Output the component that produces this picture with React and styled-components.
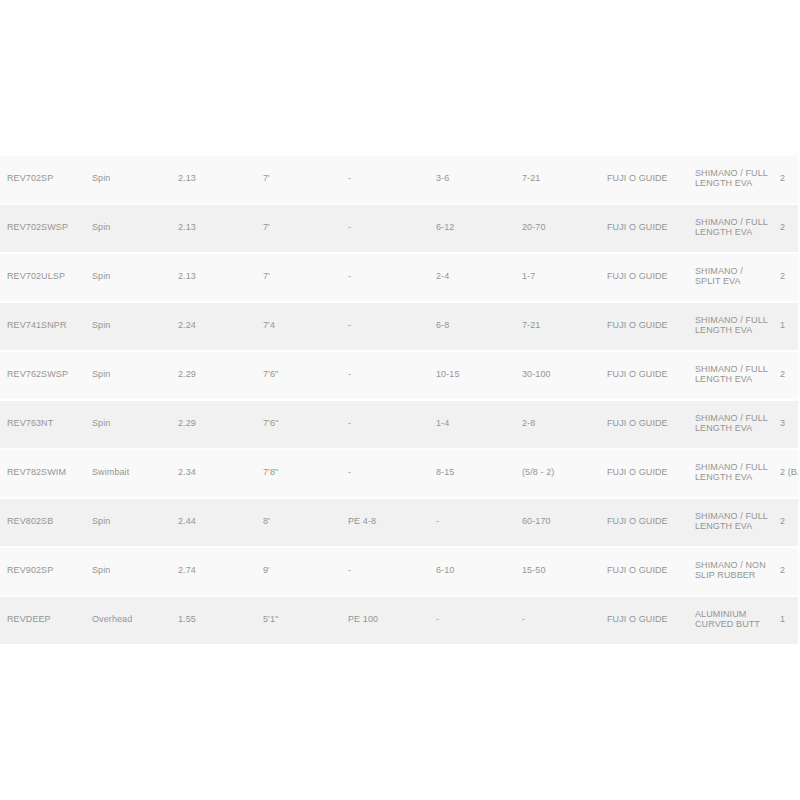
import React from "react";
import styled, { createGlobalStyle } from "styled-components";

const rods = [
  ["REV702SP", "Spin", "2.13", "7'", "-", "3-6", "7-21", "FUJI O GUIDE", "SHIMANO / FULL LENGTH EVA", "2"],
  ["REV702SWSP", "Spin", "2.13", "7'", "-", "6-12", "20-70", "FUJI O GUIDE", "SHIMANO / FULL LENGTH EVA", "2"],
  ["REV702ULSP", "Spin", "2.13", "7'", "-", "2-4", "1-7", "FUJI O GUIDE", "SHIMANO / SPLIT EVA", "2"],
  ["REV741SNPR", "Spin", "2.24", "7'4", "-", "6-8", "7-21", "FUJI O GUIDE", "SHIMANO / FULL LENGTH EVA", "1"],
  ["REV762SWSP", "Spin", "2.29", "7'6''", "-", "10-15", "30-100", "FUJI O GUIDE", "SHIMANO / FULL LENGTH EVA", "2"],
  ["REV763NT", "Spin", "2.29", "7'6''", "-", "1-4", "2-8", "FUJI O GUIDE", "SHIMANO / FULL LENGTH EVA", "3"],
  ["REV782SWIM", "Swimbait", "2.34", "7'8''", "-", "8-15", "(5/8 - 2)", "FUJI O GUIDE", "SHIMANO / FULL LENGTH EVA", "2 (BJ)"],
  ["REV802SB", "Spin", "2.44", "8'", "PE 4-8", "-", "60-170", "FUJI O GUIDE", "SHIMANO / FULL LENGTH EVA", "2"],
  ["REV902SP", "Spin", "2.74", "9'", "-", "6-10", "15-50", "FUJI O GUIDE", "SHIMANO / NON SLIP RUBBER", "2"],
  ["REVDEEP", "Overhead", "1.55", "5'1''", "PE 100", "-", "-", "FUJI O GUIDE", "ALUMINIUM CURVED BUTT", "1"],
];

const widths = [85, 86, 85, 85, 88, 86, 85, 88, 85, 120];

const GlobalStyle = createGlobalStyle`
  body {
    margin: 0;
    background: #fefefe;
    font-family: "Liberation Sans", Arial, sans-serif;
  }
`;

const Page = styled.div`
  padding-top: 154px;
`;

const Scroller = styled.div`
  width: 798px;
  overflow: hidden;
`;

const Table = styled.table`
  border-collapse: separate;
  border-spacing: 0 2px;
  table-layout: fixed;
  width: ${widths.reduce((a, b) => a + b, 0)}px;
`;

const Row = styled.tr`
  background: ${props => (props.odd ? "#f9f9f9" : "#f1f1f1")};
  height: 47px;
`;

const Cell = styled.td`
  padding: 0 3px 3px 7px;
  vertical-align: middle;
  font-size: 9px;
  line-height: 10px;
  letter-spacing: 0.1px;
  color: #959595;
  white-space: ${props => (props.nowrap ? "nowrap" : "normal")};
`;

export default function App() {
  return (
    <Page>
      <GlobalStyle />
      <Scroller>
        <Table>
          <colgroup>
            {widths.map((w, i) => (
              <col key={i} style={{ width: w }} />
            ))}
          </colgroup>
          <tbody>
            {rods.map((row, i) => (
              <Row key={row[0]} odd={i % 2 === 0}>
                {row.map((val, j) => (
                  <Cell key={j} nowrap={j === 9}>
                    {val}
                  </Cell>
                ))}
              </Row>
            ))}
          </tbody>
        </Table>
      </Scroller>
    </Page>
  );
}
